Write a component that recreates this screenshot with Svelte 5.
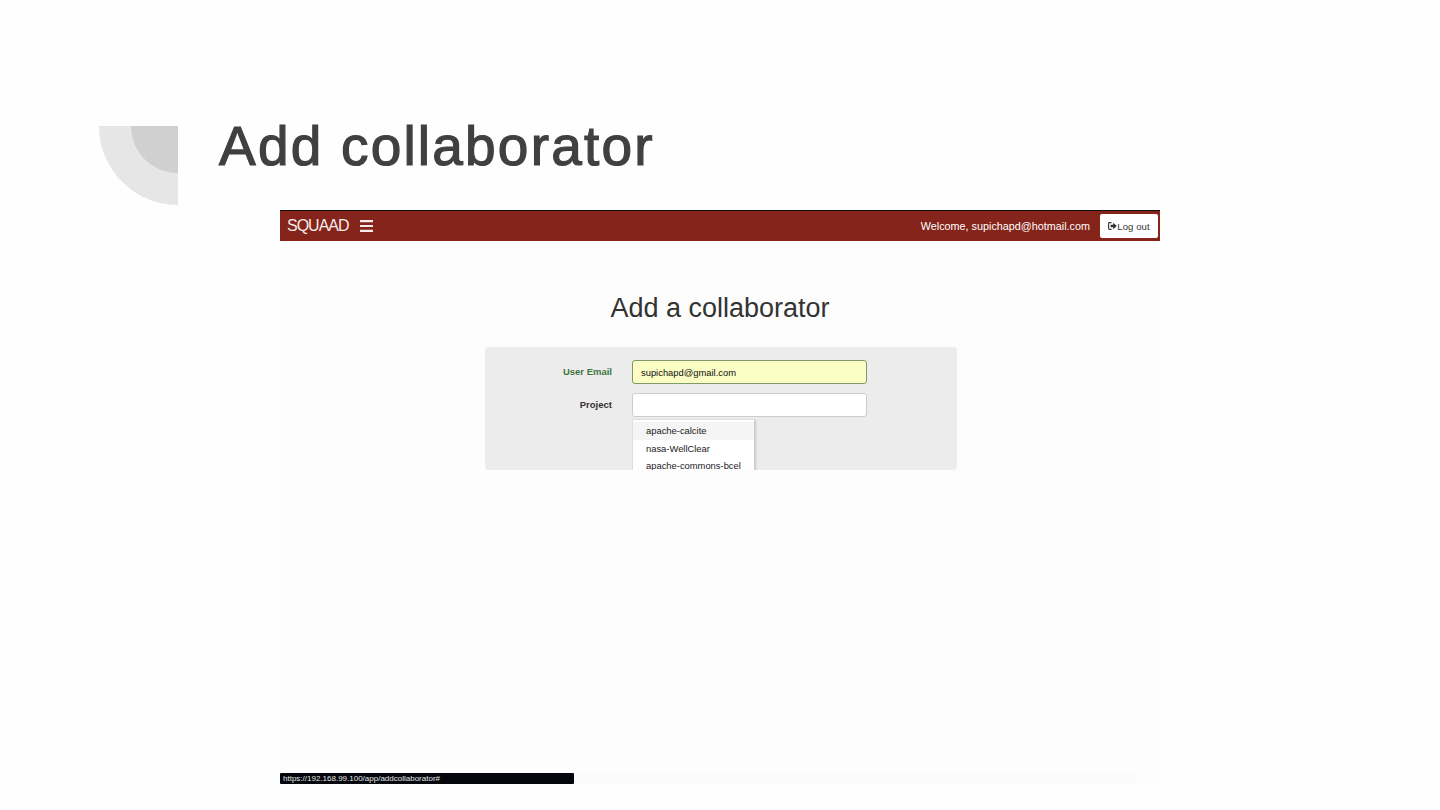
<script>
  let email = 'supichapd@gmail.com';
  let projects = ['apache-calcite', 'nasa-WellClear', 'apache-commons-bcel'];
</script>

<div class="slide">
  <header class="slide-head">
    <svg class="corner" width="79" height="79" viewBox="0 0 79 79">
      <path d="M0 0H79V79A79 79 0 0 1 0 0Z" fill="#e6e6e6" />
      <path d="M32 0H79V47A47 47 0 0 1 32 0Z" fill="#d0d0d0" />
    </svg>
    <h1>Add collaborator</h1>
  </header>

  <div class="shot">
    <nav class="navbar">
      <div class="brand">
        <span>SQUAAD</span>
        <svg width="13" height="12" viewBox="0 0 13 12">
          <path d="M0 0h13v2.2H0zM0 4.9h13v2.2H0zM0 9.8h13V12H0z" fill="#f6ebe8" />
        </svg>
      </div>
      <div class="user">
        <span class="welcome">Welcome, supichapd@hotmail.com</span>
        <button class="logout">
          <svg width="9" height="8" viewBox="0 0 9 8">
            <path d="M3.5 0.6H1.4Q0.6 0.6 0.6 1.4V6.6Q0.6 7.4 1.4 7.4H3.5" fill="none" stroke="#333" stroke-width="1.1" />
            <path d="M2.6 2.8H5.2V0.8L8.8 4L5.2 7.2V5.2H2.6Z" fill="#333" />
          </svg>Log out
        </button>
      </div>
    </nav>

    <h2>Add a collaborator</h2>

    <form class="panel">
      <div class="row valid">
        <label for="user-email">User Email</label>
        <input id="user-email" value={email} />
      </div>
      <div class="row">
        <label for="project">Project</label>
        <div class="combo">
          <input id="project" />
          <ul class="menu">
            {#each projects as project, i}
              <li class:active={i === 0}>{project}</li>
            {/each}
          </ul>
        </div>
      </div>
    </form>

    <div class="spacer"></div>

    <footer class="status">
      <div class="url">https://192.168.99.100/app/addcollaborator#</div>
      <div class="strip"></div>
    </footer>
  </div>
</div>

<style>
  :global(body) {
    background: #fefefe;
  }

  .slide {
    height: 810px;
    padding-top: 121px;
    box-sizing: border-box;
    font-family: "Liberation Sans", Arial, sans-serif;
    overflow: hidden;
  }

  .slide-head {
    display: flex;
    align-items: flex-start;
    gap: 41px;
    height: 89px;
    padding-left: 99px;
  }

  .corner {
    margin-top: 5px;
    flex: none;
  }

  h1 {
    margin: 1px 0 0;
    font-size: 55px;
    line-height: 48px;
    font-weight: 400;
    letter-spacing: 2.2px;
    color: #404040;
    -webkit-text-stroke: 1.2px #404040;
  }

  .shot {
    width: 880px;
    height: 574px;
    margin-left: 280px;
    display: flex;
    flex-direction: column;
    background: #fdfdfd;
  }

  .navbar {
    height: 30px;
    flex: none;
    border-top: 1px solid #111;
    background: #84241a;
    display: flex;
    align-items: center;
    justify-content: space-between;
    padding: 0 2px 0 7px;
    color: #f6ebe8;
  }

  .brand {
    display: flex;
    align-items: center;
    gap: 11px;
    font-size: 16px;
    letter-spacing: -1px;
  }

  .brand span {
    margin-top: -1px;
  }

  .user {
    display: flex;
    align-items: center;
    gap: 10px;
  }

  .welcome {
    font-size: 10.8px;
    color: #fff;
    margin-top: -1px;
  }

  .logout {
    width: 58px;
    height: 24px;
    padding: 0;
    border: 0;
    border-radius: 2px;
    background: #fff;
    color: #333;
    font: 9.5px "Liberation Sans", Arial, sans-serif;
    letter-spacing: 0.1px;
    display: flex;
    align-items: center;
    justify-content: center;
  }

  h2 {
    margin: 51px 0 0;
    text-align: center;
    font-size: 27px;
    line-height: 32px;
    font-weight: 400;
    color: #333;
  }

  .panel {
    width: 472px;
    height: 123px;
    margin: 23px 0 0 205px;
    padding-top: 13px;
    box-sizing: border-box;
    flex: none;
    background: #ececec;
    border-radius: 4px;
    overflow: hidden;
  }

  .row {
    display: flex;
    align-items: flex-start;
    gap: 20px;
    margin-bottom: 9px;
  }

  label {
    width: 127px;
    text-align: right;
    font-size: 9.5px;
    line-height: 24px;
    font-weight: 700;
    color: #333;
  }

  .valid label {
    color: #3c763d;
  }

  input {
    display: block;
    width: 235px;
    height: 24px;
    padding: 0 8px;
    box-sizing: border-box;
    border: 1px solid #ccc;
    border-radius: 3px;
    background: #fff;
    font: 9.4px "Liberation Sans", Arial, sans-serif;
    color: #111;
    outline: none;
  }

  .valid input {
    background: #fbfdc4;
    border-color: #7d9a67;
  }

  .combo {
    width: 235px;
  }

  .menu {
    list-style: none;
    width: 123px;
    margin: 2px 0 0;
    padding: 2px 0 0;
    box-sizing: border-box;
    background: #fff;
    border: 1px solid #ddd;
    border-right-color: #ccc;
    box-shadow: 1px 1px 2px rgba(0, 0, 0, 0.15);
    font-size: 9.4px;
    color: #222;
  }

  .menu li {
    height: 17.5px;
    line-height: 17.5px;
    padding-left: 13px;
    white-space: nowrap;
  }

  .menu li.active {
    background: #f5f5f5;
  }

  .spacer {
    flex: 1;
  }

  .status {
    height: 11px;
    flex: none;
    display: flex;
  }

  .url {
    width: 294px;
    flex: none;
    background: #04060c;
    color: #e6e6e6;
    font-size: 8px;
    line-height: 11px;
    padding-left: 3px;
    box-sizing: border-box;
    border-radius: 1px;
  }

  .strip {
    width: 562px;
    background: #fbfbfb;
  }
</style>
